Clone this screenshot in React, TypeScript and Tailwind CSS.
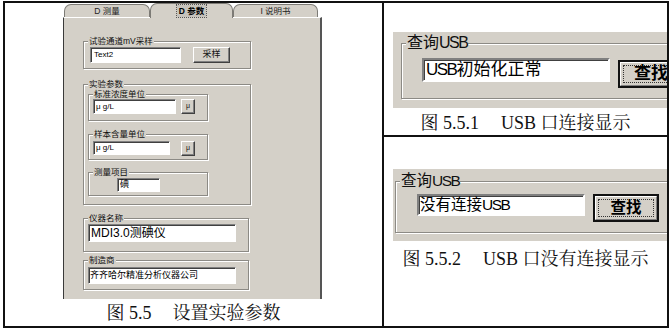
import type { ReactNode } from "react";

const ui = "font-['Liberation_Sans','Noto_Sans_CJK_SC',sans-serif]";
const serif = "font-['Liberation_Serif','Noto_Serif_CJK_SC','Noto_Sans_CJK_SC',serif]";

// windows-style etched group box
function Group({
  label,
  legend,
  className,
  children,
}: {
  label: ReactNode;
  legend: string;
  className: string;
  children: ReactNode;
}) {
  return (
    <fieldset
      className={
        "border border-[#8c8a85] shadow-[1px_1px_0_#fff,inset_1px_1px_0_#fff] " +
        className
      }
    >
      <legend className={"ml-[4px] px-[1px] bg-[#d4d0c8] text-[#111] " + legend}>
        {label}
      </legend>
      {children}
    </fieldset>
  );
}

function Field({ className, children }: { className: string; children?: ReactNode }) {
  return (
    <div
      className={
        "flex items-center bg-white border border-t-[#808080] border-l-[#808080] border-b-white border-r-white shadow-[inset_1px_1px_0_#404040] text-black whitespace-nowrap overflow-hidden " +
        className
      }
    >
      {children}
    </div>
  );
}

function SmallBtn({ className, children }: { className: string; children: ReactNode }) {
  return (
    <div
      className={
        "flex items-center justify-center bg-[#d4d0c8] border border-t-white border-l-white border-b-[#404040] border-r-[#404040] shadow-[inset_-1px_-1px_0_#808080] text-[#111] " +
        className
      }
    >
      {children}
    </div>
  );
}

function FindBtn({ className, text }: { className: string; text: string }) {
  return (
    <div className={"border-2 border-[#111] bg-[#d4d0c8] " + className}>
      <div className="h-full border border-t-white border-l-white border-b-[#808080] border-r-[#808080] p-[2px]">
        <div className="h-full flex items-center justify-center border border-dotted border-[#333] text-black font-bold">
          {text}
        </div>
      </div>
    </div>
  );
}

function Tab({ label, active, className }: { label: string; active?: boolean; className: string }) {
  return (
    <div
      className={
        "flex items-center justify-center bg-[#d4d0c8] border-t border-l border-r border-[#7d7b76] rounded-t-[7px] text-[8.5px] " +
        (active ? "h-[15px] -mb-[1px] z-10 " : "h-[13px] mt-[2px] ") +
        className
      }
    >
      <span className={active ? "font-bold bg-[#c6c3bc] px-[2px] outline outline-1 outline-dotted outline-[#555]" : "text-[#222]"}>
        {label}
      </span>
    </div>
  );
}

function SettingsPanel() {
  return (
    <div className={"ml-[58px] w-[259px] flex flex-col " + ui}>
      <div className="flex pl-[1px] h-[14px] items-end">
        <Tab label="D 测量" className="w-[86px]" />
        <Tab label="D 参数" active className="w-[83px]" />
        <Tab label="I 说明书" className="w-[85px]" />
      </div>
      <div className="h-[282px] bg-[#d4d0c8] border-l border-[#3a3a3a] border-r-2 border-r-[#555] border-t border-t-white pl-[19px] flex flex-col items-start">
        <Group
          label="试验通道mV采样"
          legend="text-[8.5px] leading-[10px]"
          className="mt-[18px] w-[168px]"
        >
          <div className="flex items-start gap-[12px] pl-[6px] pt-[1px] pb-[5px]">
            <Field className="w-[91px] h-[16px] text-[8px] pl-[3px]">Text2</Field>
            <SmallBtn className="w-[37px] h-[16px] text-[9px]">采样</SmallBtn>
          </div>
        </Group>

        <Group label="实验参数" legend="text-[8.5px] leading-[10px]" className="mt-[10px] w-[168px]">
          <div className="flex flex-col items-start pl-[4px] pb-[8px]">
            <Group label="标准浓度单位" legend="text-[8.5px] leading-[10px]" className="w-[120px]">
              <div className="flex items-start gap-[5px] pl-[4px] pb-[6px]">
                <Field className="w-[83px] h-[15px] text-[8px] pl-[2px]">μ g/L</Field>
                <SmallBtn className="w-[14px] h-[15px] text-[7px]">μ</SmallBtn>
              </div>
            </Group>
            <Group label="样本含量单位" legend="text-[8.5px] leading-[10px]" className="mt-[8px] w-[120px]">
              <div className="flex items-start gap-[11px] pl-[4px] pt-[2px] pb-[3px]">
                <Field className="w-[77px] h-[14px] text-[8px] pl-[2px]">μ g/L</Field>
                <SmallBtn className="w-[14px] h-[15px] text-[7px]">μ</SmallBtn>
              </div>
            </Group>
            <Group label="测量项目" legend="text-[8.5px] leading-[10px]" className="mt-[7px] w-[120px]">
              <div className="pl-[28px] pt-[1px] pb-[3px]">
                <Field className="w-[43px] h-[14px] text-[9px] pl-[2px]">碘</Field>
              </div>
            </Group>
          </div>
        </Group>

        <Group label="仪器名称" legend="text-[8.5px] leading-[10px]" className="mt-[8px] w-[166px]">
          <div className="pl-[4px] pt-[1px] pb-[9px]">
            <Field className="w-[148px] h-[18px] text-[12px] pl-[2px]">MDI3.0测碘仪</Field>
          </div>
        </Group>

        <Group label="制造商" legend="text-[8.5px] leading-[10px]" className="mt-[3px] w-[166px]">
          <div className="pl-[4px] pt-[2px] pb-[5px]">
            <Field className="w-[148px] h-[17px] text-[9px] pl-[1px]">齐齐哈尔精准分析仪器公司</Field>
          </div>
        </Group>
      </div>
    </div>
  );
}

// narrow latin like the old bitmap font
const Usb = () => <span className="tracking-[-1.5px]">USB</span>;

function UsbBox({
  top,
  groupMl,
  legend,
  legendMt,
  fieldText,
  fieldClass,
  btnClass,
  pl,
  pb,
  font,
}: {
  top: string;
  groupMl: string;
  legend: string;
  legendMt: string;
  fieldText: ReactNode;
  fieldClass: string;
  btnClass: string;
  pl: string;
  pb: string;
  font: string;
}) {
  return (
    <div className={"ml-[9px] w-[274px] bg-[#d4d0c8] overflow-hidden flex flex-col " + top + " " + ui}>
      <Group
        label={
          <>
            查询<Usb />
          </>
        }
        legend={legend}
        className={"w-[320px] " + groupMl + " " + legendMt}
      >
        <div className={"flex items-start gap-[8px] " + pl + " " + pb}>
          <Field className={fieldClass + " " + font}>{fieldText}</Field>
          <FindBtn className={btnClass + " " + font} text="查找" />
        </div>
      </Group>
    </div>
  );
}

export default function App() {
  return (
    <div className="w-[672px] h-[330px] bg-white pl-[3px] pt-[1px]">
      <div className="flex w-[666px] h-[327px] border-2 border-[#111]">
        <div className="w-[379px] border-r-2 border-[#111] flex flex-col">
          <SettingsPanel />
          <div className={"mt-[3px] h-[22px] flex items-center justify-center text-[18px] text-[#111] " + serif}>
            <span>图 5.5</span>
            <span className="ml-[21px]">设置实验参数</span>
          </div>
        </div>

        <div className="flex-1 flex flex-col overflow-hidden">
          <div className="h-[134px] border-b-2 border-[#111] flex flex-col">
            <UsbBox
              top="mt-[29px] h-[76px]"
              groupMl="ml-[8px]"
              legend="text-[16px] leading-[16px]"
              legendMt="mt-[3px]"
              fieldText={
                <>
                  <Usb />初始化正常
                </>
              }
              fieldClass="w-[188px] h-[24px] mt-[7px] pl-[2px] border-2 shadow-[inset_1px_1px_0_#222]"
              btnClass="w-[66px] h-[28px] mt-[9px] shrink-0"
              pl="pl-[20px]"
              pb="pb-[10px]"
              font="text-[17px]"
            />
            <div className={"mt-[5px] h-[20px] flex items-center justify-center text-[18px] text-[#111] " + serif}>
              <span>图 5.5.1</span>
              <span className="ml-[22px]">USB 口连接显示</span>
            </div>
          </div>

          <div className="flex flex-col">
            <UsbBox
              top="mt-[32px] h-[72px]"
              groupMl="ml-[2px]"
              legend="text-[15.5px] leading-[16px]"
              legendMt="mt-[4px]"
              fieldText={
                <>
                  没有连接<Usb />
                </>
              }
              fieldClass="w-[168px] h-[22px] mt-[5px] pl-[1px] border-2 shadow-[inset_1px_1px_0_#222]"
              btnClass="w-[66px] h-[28px] mt-[5px] shrink-0"
              pl="pl-[21px]"
              pb="pb-[10px]"
              font="text-[15.5px]"
            />
            <div className={"mt-[8px] h-[20px] flex items-center justify-center text-[18px] text-[#111] " + serif}>
              <span>图 5.5.2</span>
              <span className="ml-[22px]">USB 口没有连接显示</span>
            </div>
          </div>
        </div>
      </div>
    </div>
  );
}
